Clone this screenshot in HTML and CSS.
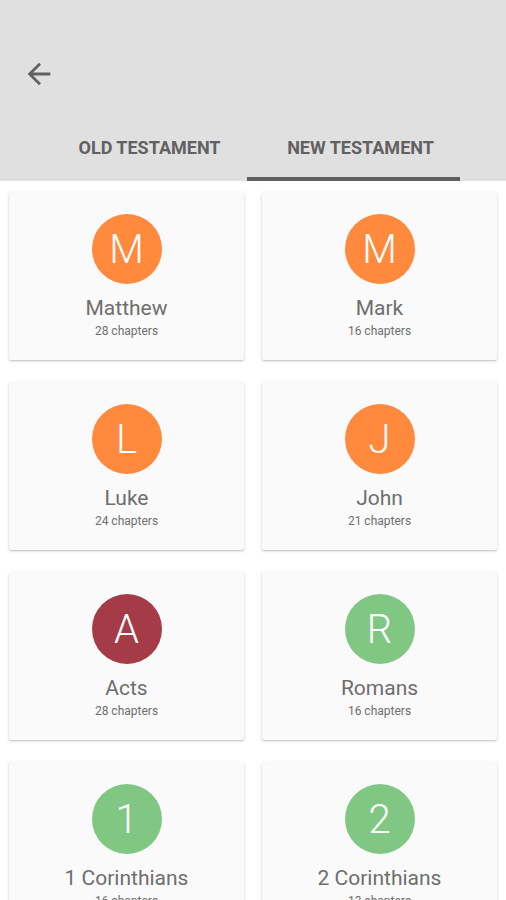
FILE: index.html
```
<!DOCTYPE html>
<html lang="en">
<head>
    <meta charset="UTF-8">
    <meta name="viewport" content="width=device-width, initial-scale=1.0">
    <title>Books</title>
    <link rel="stylesheet" href="styles.css">
</head>
<body>

    <header class="app-bar">
        <div class="toolbar">
            <button class="back-btn" aria-label="Back">
                <svg viewBox="0 0 24 24" width="34" height="34">
                    <path d="M20 11H7.83l5.59-5.59L12 4l-8 8 8 8 1.41-1.41L7.83 13H20v-2z" fill="currentColor"/>
                </svg>
            </button>
        </div>
        <nav class="tabs">
            <div class="tab">Old Testament</div>
            <div class="tab active">New Testament</div>
        </nav>
    </header>

    <main class="book-grid">
        <div class="book-card">
            <div class="avatar orange">M</div>
            <p class="book-name">Matthew</p>
            <p class="book-chapters">28 chapters</p>
        </div>
        <div class="book-card">
            <div class="avatar orange">M</div>
            <p class="book-name">Mark</p>
            <p class="book-chapters">16 chapters</p>
        </div>
        <div class="book-card">
            <div class="avatar orange">L</div>
            <p class="book-name">Luke</p>
            <p class="book-chapters">24 chapters</p>
        </div>
        <div class="book-card">
            <div class="avatar orange">J</div>
            <p class="book-name">John</p>
            <p class="book-chapters">21 chapters</p>
        </div>
        <div class="book-card">
            <div class="avatar red">A</div>
            <p class="book-name">Acts</p>
            <p class="book-chapters">28 chapters</p>
        </div>
        <div class="book-card">
            <div class="avatar green">R</div>
            <p class="book-name">Romans</p>
            <p class="book-chapters">16 chapters</p>
        </div>
        <div class="book-card">
            <div class="avatar green">1</div>
            <p class="book-name">1 Corinthians</p>
            <p class="book-chapters">16 chapters</p>
        </div>
        <div class="book-card">
            <div class="avatar green">2</div>
            <p class="book-name">2 Corinthians</p>
            <p class="book-chapters">13 chapters</p>
        </div>
    </main>

</body>
</html>
```
FILE: styles.css
```
:root {
    --header-color: #e0e0e0;
    --text-color: #616161;
    --card-text: #6e6e6e;
    --card-color: #fafafa;
    --orange: #ff8a3d;
    --green: #81c784;
    --red: #a53b46;
}

body {
    font-family: 'Roboto', 'Noto Sans', sans-serif;
    margin: 0;
    padding: 0;
    background-color: #fff;
    color: var(--text-color);
    height: 900px;
    overflow: hidden;
}

p {
    margin: 0;
}

.app-bar {
    background-color: var(--header-color);
}

.toolbar {
    height: 112px;
    padding: 57px 0 0 22px;
    box-sizing: border-box;
}

.back-btn {
    display: block;
    padding: 0;
    border: none;
    background: none;
    color: var(--text-color);
    cursor: pointer;
}

.back-btn svg {
    display: block;
}

.tabs {
    display: flex;
    height: 69px;
    padding-left: 34px;
}

.tab {
    width: 213px;
    display: flex;
    align-items: center;
    justify-content: center;
    box-sizing: border-box;
    padding: 6px 0 0 18px;
    font-size: 18px;
    font-weight: 700;
    text-transform: uppercase;
    color: var(--text-color);
    border-bottom: 4px solid transparent;
}

.tab.active {
    padding-left: 14px;
    border-bottom-color: #5f5f5f;
}

.book-grid {
    display: grid;
    grid-template-columns: 1fr 1fr;
}

.book-card {
    margin: 11px 9px;
    padding: 22px 0 21px;
    background-color: var(--card-color);
    border-radius: 2px;
    box-shadow: 0 1px 3px rgba(0, 0, 0, 0.22), 0 1px 1px rgba(0, 0, 0, 0.06);
    display: flex;
    flex-direction: column;
    align-items: center;
}

.avatar {
    width: 70px;
    height: 70px;
    border-radius: 50%;
    display: flex;
    align-items: center;
    justify-content: center;
    color: #fff;
    font-size: 40px;
    font-weight: 300;
}

.orange {
    background-color: var(--orange);
}

.green {
    background-color: var(--green);
}

.red {
    background-color: var(--red);
}

.book-name {
    margin-top: 12px;
    font-size: 21px;
    line-height: 24px;
    color: var(--card-text);
}

.book-chapters {
    margin-top: 3px;
    font-size: 12px;
    line-height: 16px;
    color: var(--card-text);
}
```
